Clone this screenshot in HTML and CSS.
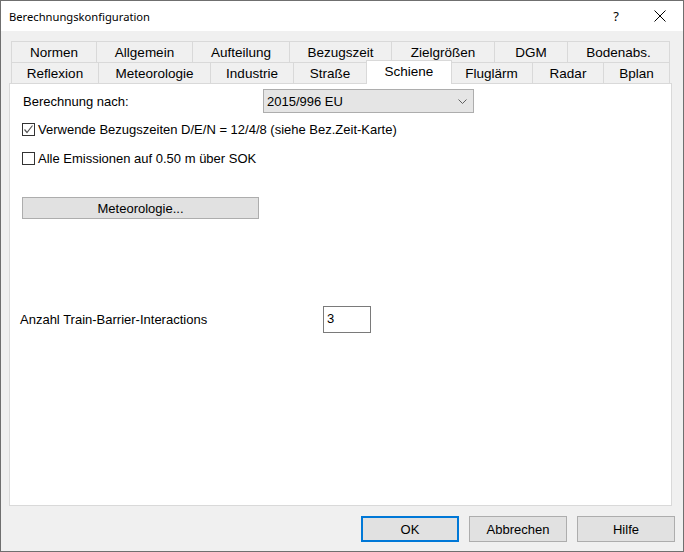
FILE: index.html
```html
<!DOCTYPE html>
<html lang="de">
<head>
    <meta charset="UTF-8">
    <title>Berechnungskonfiguration</title>
    <link rel="stylesheet" href="styles.css">
</head>
<body>
    <div class="dialog">
        <div class="titlebar">
            <span class="title">Berechnungskonfiguration</span>
            <span class="help-btn">?</span>
            <span class="close-btn">
                <svg width="12" height="12" viewBox="0 0 12 12">
                    <path d="M0.5 0.5 L11.5 11.5 M11.5 0.5 L0.5 11.5" stroke="#000" stroke-width="1" fill="none"/>
                </svg>
            </span>
        </div>

        <div class="client">
            <div class="tabs">
                <div class="tab-row row-top">
                    <div class="tab">Normen</div>
                    <div class="tab">Allgemein</div>
                    <div class="tab">Aufteilung</div>
                    <div class="tab">Bezugszeit</div>
                    <div class="tab">Zielgrößen</div>
                    <div class="tab">DGM</div>
                    <div class="tab">Bodenabs.</div>
                </div>
                <div class="tab-row row-bottom">
                    <div class="tab">Reflexion</div>
                    <div class="tab">Meteorologie</div>
                    <div class="tab">Industrie</div>
                    <div class="tab">Straße</div>
                    <div class="tab active">Schiene</div>
                    <div class="tab">Fluglärm</div>
                    <div class="tab">Radar</div>
                    <div class="tab">Bplan</div>
                </div>
            </div>

            <div class="panel">
                <div class="field-row">
                    <label class="field-label">Berechnung nach:</label>
                    <div class="combo">
                        <span>2015/996 EU</span>
                        <svg class="combo-arrow" width="9" height="5" viewBox="0 0 9 5">
                            <path d="M0.5 0.5 L4.5 4.5 L8.5 0.5" stroke="#606060" stroke-width="1" fill="none"/>
                        </svg>
                    </div>
                </div>

                <div class="check-row first">
                    <span class="checkbox">
                        <svg width="11" height="11" viewBox="0 0 11 11">
                            <path d="M1.5 5.5 L4 8.5 L9.5 1.5" stroke="#555" stroke-width="1.2" fill="none"/>
                        </svg>
                    </span>
                    <span>Verwende Bezugszeiten D/E/N = 12/4/8 (siehe Bez.Zeit-Karte)</span>
                </div>
                <div class="check-row">
                    <span class="checkbox"></span>
                    <span>Alle Emissionen auf 0.50 m über SOK</span>
                </div>

                <button class="btn btn-wide">Meteorologie...</button>

                <div class="field-row interactions">
                    <label class="field-label short">Anzahl Train-Barrier-Interactions</label>
                    <div class="num-input">3</div>
                </div>
            </div>

            <div class="button-bar">
                <button class="btn btn-default">OK</button>
                <button class="btn">Abbrechen</button>
                <button class="btn">Hilfe</button>
            </div>
        </div>
    </div>
</body>
</html>
```

FILE: styles.css
```css
* {
    margin: 0;
    padding: 0;
    box-sizing: border-box;
}

body {
    background: #f0f0f0;
    font-family: 'Liberation Sans', Arial, sans-serif;
    font-size: 13px;
    color: #000;
}

/* Window frame */
.dialog {
    width: 684px;
    height: 552px;
    border: 1px solid #6f6f6f;
    background: #f0f0f0;
    display: flex;
    flex-direction: column;
}

.titlebar {
    height: 30px;
    background: #fff;
    display: flex;
    align-items: center;
    padding-left: 8px;
}

.title {
    font-family: 'Noto Sans', 'Open Sans', sans-serif;
    font-size: 11.2px;
    flex: 1;
}

.help-btn {
    font-family: 'Noto Sans', sans-serif;
    font-size: 13px;
    width: 30px;
    text-align: center;
    margin-right: 6px;
}

.close-btn {
    width: 46px;
    height: 30px;
    display: flex;
    align-items: center;
    justify-content: center;
}

.client {
    flex: 1;
    display: flex;
    flex-direction: column;
    padding: 10px 0 9px 8px;
}

/* Tab strip */
.tabs {
    margin-left: 2px;
    width: 659px;
}

.tab-row {
    display: grid;
    height: 21px;
}

.row-top {
    grid-template-columns: 86px 96px 97px 102px 103px 73px 102px;
}

.row-bottom {
    grid-template-columns: 88px 112px 83px 73px 84px 82px 71px 66px;
}

.tab {
    font-size: 13.5px;
    border-top: 1px solid #d9d9d9;
    border-right: 1px solid #d9d9d9;
    background: #f0f0f0;
    display: flex;
    align-items: center;
    justify-content: center;
    padding-top: 1px;
}

.tab:first-child {
    border-left: 1px solid #d9d9d9;
}

.tab.active {
    position: relative;
    z-index: 2;
    background: #fff;
    margin: -2px -1px -1px -1px;
    border-left: 1px solid #d9d9d9;
    padding-top: 0;
    padding-bottom: 3px;
}

/* Tab page */
.panel {
    width: 663px;
    height: 423px;
    background: #fff;
    border: 1px solid #d9d9d9;
    padding: 5px 0 0 12px;
    display: flex;
    flex-direction: column;
    align-items: flex-start;
}

.field-row {
    display: flex;
    align-items: center;
}

.field-label {
    width: 240px;
    margin-left: 1px;
}

.combo {
    width: 211px;
    height: 24px;
    background: #e5e5e5;
    border: 1px solid #adadad;
    display: flex;
    align-items: center;
    justify-content: space-between;
    padding: 0 6px 0 3px;
}

.combo-arrow {
    margin-top: 1px;
}

.check-row {
    display: flex;
    align-items: center;
    gap: 2px;
    height: 13px;
    margin-top: 16px;
}

.check-row.first {
    margin-top: 10px;
}

.checkbox {
    width: 13px;
    height: 13px;
    border: 1px solid #333;
    background: #fff;
    display: flex;
    align-items: center;
    justify-content: center;
    margin-right: 1px;
}

.btn {
    font-family: 'Liberation Sans', Arial, sans-serif;
    font-size: 13px;
    color: #000;
    background: #e1e1e1;
    border: 1px solid #adadad;
    height: 26px;
    width: 98px;
}

.btn-wide {
    width: 237px;
    height: 22px;
    margin-top: 32px;
}

.interactions {
    margin-top: 87px;
    margin-left: -3px;
}

.field-label.short {
    width: 303px;
}

.num-input {
    width: 48px;
    height: 27px;
    border: 1px solid #7a7a7a;
    background: #fff;
    padding: 4px 0 0 3px;
}

/* Dialog buttons */
.button-bar {
    display: flex;
    justify-content: flex-end;
    gap: 10px;
    margin-top: 10px;
    padding-right: 8px;
}

.btn-default {
    border: 2px solid #0078d7;
}
```
